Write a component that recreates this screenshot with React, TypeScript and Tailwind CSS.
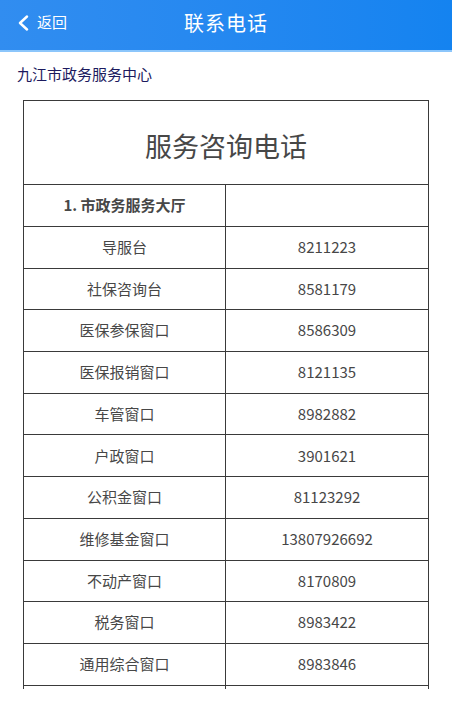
const rows = [
  ['导服台', '8211223'],
  ['社保咨询台', '8581179'],
  ['医保参保窗口', '8586309'],
  ['医保报销窗口', '8121135'],
  ['车管窗口', '8982882'],
  ['户政窗口', '3901621'],
  ['公积金窗口', '81123292'],
  ['维修基金窗口', '13807926692'],
  ['不动产窗口', '8170809'],
  ['税务窗口', '8983422'],
  ['通用综合窗口', '8983846'],
]

export default function App() {
  return (
    <div className="w-[452px] h-[701px] overflow-hidden bg-white font-['Noto_Sans_CJK_SC',sans-serif]">
      {/* Header */}
      <div className="relative h-[52px] flex items-center justify-center pb-[5px] bg-gradient-to-r from-[#318df0] to-[#1483f0] border-b-2 border-[#8cc6fb]">
        <div className="absolute left-[17px] top-0 h-full flex items-center gap-[8px] pb-[5px] text-white">
          <svg width="12" height="16" viewBox="0 0 12 16" fill="none">
            <path d="M10 1.5 L3 8 L10 14.5" stroke="white" strokeWidth="2.4" strokeLinecap="round" strokeLinejoin="round" />
          </svg>
          <span className="text-[15px]">返回</span>
        </div>
        <span className="text-white text-[20px] tracking-[1px]">联系电话</span>
      </div>

      <div className="pl-[17px] pt-[11px] pb-[15px] text-[15px] text-[#1c1a5e] leading-[22px]">九江市政务服务中心</div>

      {/* Table */}
      <div className="ml-[23px] w-[406px] border-l-[1.5px] border-r-[1.5px] border-t-[1.5px] border-[#3a3a3a] text-[#474747]">
        <div className="h-[84px] flex items-center justify-center pt-[8px] text-[27px] border-b-[1.5px] border-[#3a3a3a]">
          服务咨询电话
        </div>
        <div className="grid grid-cols-[202px_1fr] h-[42px] border-b-[1.5px] border-[#3a3a3a]">
          <div className="flex items-center justify-center text-[15px] font-bold border-r-[1.5px] border-[#3a3a3a]">1. 市政务服务大厅</div>
          <div />
        </div>
        {rows.map(([name, phone]) => (
          <div key={name} className="grid grid-cols-[202px_1fr] h-[41.7px] border-b-[1.5px] border-[#3a3a3a]">
            <div className="flex items-center justify-center text-[15px] border-r-[1.5px] border-[#3a3a3a]">{name}</div>
            <div className="flex items-center justify-center text-[15px]">{phone}</div>
          </div>
        ))}
        <div className="grid grid-cols-[202px_1fr] h-[3px]">
          <div className="border-r-[1.5px] border-[#3a3a3a]" />
          <div />
        </div>
      </div>
    </div>
  )
}
